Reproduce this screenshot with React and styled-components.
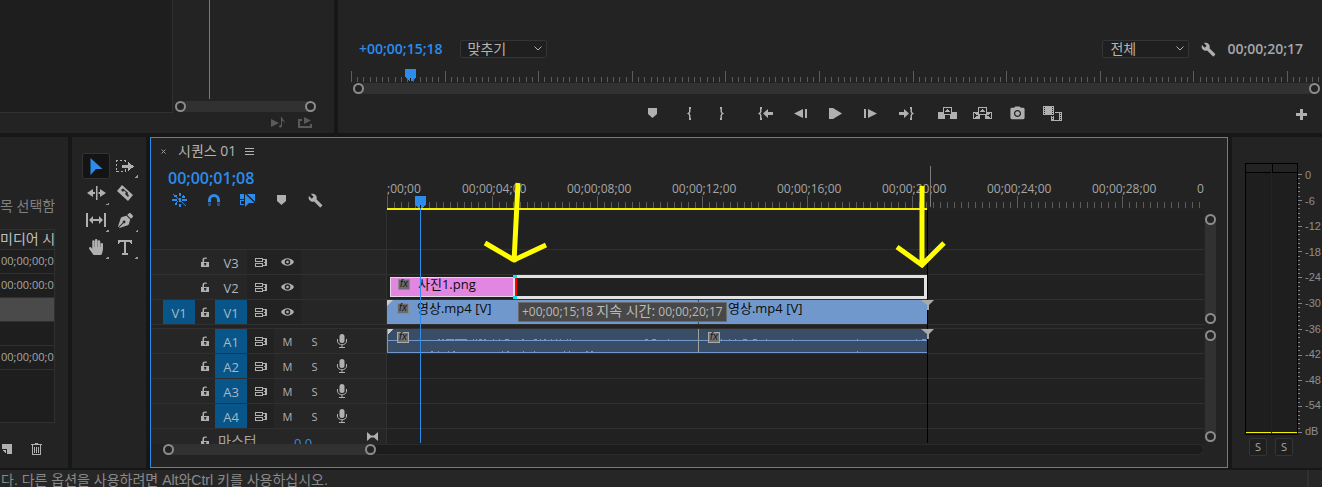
import React from "react";
import styled, { createGlobalStyle, css } from "styled-components";
import { MdBuild, MdPhotoCamera } from "react-icons/md";
import { FaHandPaper, FaPenNib } from "react-icons/fa";

const c = {
  gap: "#171717",
  panel: "#232323",
  raised: "#262626",
  well: "#1e1e1e",
  lane: "#212121",
  line: "#303030",
  bar: "#313131",
  knob: "#8c8c8c",
  text: "#a6a6a6",
  icon: "#b0b0b0",
  blue: "#2d8ceb",
  target: "#085689",
  clip: "#7198cc",
  audio: "#3a4d66",
  pink: "#e386e1",
};

const Global = createGlobalStyle`
  *, *::before, *::after { box-sizing: border-box; }
  body {
    margin: 0;
    background: ${c.gap};
    color: ${c.text};
    font-family: "Open Sans", "Noto Sans CJK KR", sans-serif;
    font-size: 13px;
  }
  button, select {
    font: inherit;
    color: inherit;
    background: none;
    border: 0;
    padding: 0;
    margin: 0;
  }
  svg { display: block; flex: none; }
`;

const Shell = styled.div`
  display: flex;
  flex-direction: column;
  height: 100vh;
  overflow: hidden;
`;

const TopRow = styled.div`
  display: flex;
  gap: 4px;
  height: 133px;
  flex: none;
`;

const MainRow = styled.main`
  display: flex;
  gap: 4px;
  flex: 1;
  min-height: 0;
  margin: 4px 0 2px;
`;

const Panel = styled.section`
  background: ${c.panel};
  overflow: hidden;
`;

/* ---------- zoom scroll bars ---------- */

const Track = styled.div`
  display: flex;
  justify-content: space-between;
  align-items: center;
  background: ${c.bar};
  border-radius: 6px;
  flex-direction: ${(p) => (p.$vertical ? "column" : "row")};
  ${(p) => (p.$vertical ? css`width: 11px;` : css`height: 11px;`)}
`;

const Knob = styled.span`
  width: 11px;
  height: 11px;
  border: 2px solid ${c.knob};
  border-radius: 50%;
  background: ${c.panel};
`;

const ZoomBar = ({ vertical, className }) => (
  <Track $vertical={vertical} className={className}>
    <Knob />
    <Knob />
  </Track>
);

/* ---------- source panel ---------- */

const SourcePanel = styled(Panel)`
  width: 334px;
  display: grid;
  grid-template-columns: 173px 1fr;
  grid-template-rows: 113px 1fr;
`;

const SourceWell = styled.div`
  background: ${c.well};
  border-right: 1px solid ${c.line};
  border-bottom: 1px solid ${c.line};
`;

const SourceSide = styled.div`
  display: flex;
  flex-direction: column;
  padding: 0 18px 0 2px;
`;

const SourceCursor = styled.div`
  width: 1px;
  height: 99px;
  margin: 0 0 2px 34px;
  background: ${c.blue};
`;

const SourceButtons = styled.div`
  grid-column: 2;
  display: flex;
  gap: 12px;
  align-items: center;
  padding: 0 0 1px 98px;
  color: #5a5a5a;
`;

/* ---------- program panel ---------- */

const ProgramPanel = styled(Panel)`
  flex: 1;
  min-width: 0;
  padding-top: 38px;
`;

const ProgramHead = styled.div`
  display: flex;
  align-items: center;
  height: 22px;
  padding: 0 19px 0 21px;
`;

const Timecode = styled.span`
  font-size: ${(p) => (p.$large ? 16 : 14)}px;
  line-height: 20px;
  font-weight: 600;
  color: ${(p) => (p.$muted ? c.text : c.blue)};
`;

const SelectBox = styled.label`
  position: relative;
  width: 87px;
  margin-left: ${(p) => (p.$end ? "auto" : "17px")};
  svg {
    position: absolute;
    right: 5px;
    top: 6px;
    pointer-events: none;
  }
`;

const Select = styled.select`
  appearance: none;
  display: block;
  width: 100%;
  height: 18px;
  padding-left: 7px;
  border: 1px solid #343434;
  border-radius: 2px;
  background: #1f1f1f;
  font-size: 14px;
  line-height: 16px;
  color: #b4b4b4;
`;

const WrenchButton = styled.button`
  display: flex;
  margin: 0 11px 0 12px;
  color: ${c.icon};
`;

const MonitorRuler = styled.div`
  position: relative;
  height: 14px;
  margin: 9px 0 0 13px;
  padding-top: 2px;
`;

const MonitorHead = styled.svg`
  position: absolute;
  left: 54px;
  top: 0;
`;

const MonitorZoom = styled(ZoomBar)`
  margin: 0 2px 0 15px;
`;

const Transport = styled.div`
  display: grid;
  grid-template-columns: 7fr auto 6fr;
  align-items: center;
  height: 38px;
`;

const ButtonSet = styled.div`
  grid-column: 2;
  display: flex;
  padding-left: 2px;
`;

const TransportButton = styled.button`
  display: flex;
  justify-content: center;
  align-items: center;
  width: ${(p) => p.$w || 35}px;
  height: 24px;
  margin-left: ${(p) => p.$gap || 0}px;
  color: ${c.icon};
`;

const AddButton = styled(TransportButton)`
  justify-self: end;
  margin: 3px 3px 0 0;
`;

/* ---------- project panel ---------- */

const ProjectPanel = styled(Panel)`
  width: 68px;
  display: flex;
  flex-direction: column;
  white-space: nowrap;
`;

const ProjectNote = styled.p`
  margin: 59px 0 13px;
  font-size: 14px;
  line-height: 20px;
  color: #808080;
`;

const ProjectWell = styled.div`
  width: 55px;
  flex: 1;
  overflow: hidden;
  background: ${c.well};
  border: solid ${c.line};
  border-width: 1px 1px 1px 0;
`;

const ProjectTable = styled.table`
  border-collapse: collapse;
  table-layout: fixed;
  width: 100%;
  th, td {
    height: 24px;
    padding: 0 0 0 1px;
    border-bottom: 1px solid ${c.line};
    font-size: 11px;
    line-height: 16px;
    text-align: left;
  }
  th {
    height: 19px;
    padding: 0;
    font-size: 14px;
    line-height: 18px;
    font-weight: 400;
    color: #c0c0c0;
    background: ${c.panel};
  }
`;

const ProjectRow = styled.tr`
  background: ${(p) => (p.$selected ? "#4a4a4a" : "transparent")};
`;

const ProjectTools = styled.div`
  display: flex;
  gap: 19px;
  align-items: center;
  height: 45px;
  padding: 6px 0 0 2px;
  color: ${c.icon};
`;

const PlainButton = styled.button`
  display: flex;
`;

/* ---------- tools ---------- */

const ToolPanel = styled(Panel)`
  width: 74px;
  padding: 16px 0 0 10px;
`;

const ToolGrid = styled.div`
  display: grid;
  grid-template-columns: 28px 28px;
  grid-auto-rows: 27px;
  column-gap: 1px;
`;

const Tool = styled.button`
  position: relative;
  display: flex;
  align-items: center;
  justify-content: center;
  height: 26px;
  color: ${(p) => (p.$active ? c.blue : c.icon)};
  border: 1px solid ${(p) => (p.$active ? "#333" : "transparent")};
  border-radius: 2px;
  background: ${(p) => (p.$active ? "#141414" : "none")};
  ${(p) =>
    p.$more &&
    css`
      &::after {
        content: "";
        position: absolute;
        right: 0;
        bottom: 0;
        width: 3px;
        height: 3px;
        background: linear-gradient(135deg, transparent 50%, #999 50%);
      }
    `}
`;

/* ---------- timeline ---------- */

const TimelinePanel = styled(Panel)`
  position: relative;
  flex: 1;
  min-width: 0;
  display: flex;
  flex-direction: column;
  border: 1px solid ${c.blue};
`;

const TabRow = styled.div`
  display: flex;
  align-items: center;
  height: 28px;
  flex: none;
  padding: 0 0 2px 10px;
  color: #b4b4b4;
`;

const TabTitle = styled.span`
  margin: 0 9px 0 12px;
  font-size: 14px;
  line-height: 20px;
`;

const HeadRow = styled.div`
  display: flex;
  height: 44px;
  flex: none;
`;

const HeadControls = styled.div`
  width: 235px;
  flex: none;
  padding: 2px 0 0 17px;
`;

const SequenceTime = styled(Timecode)`
  display: block;
`;

const HeadIcons = styled.div`
  display: flex;
  gap: 19px;
  align-items: center;
  margin: 4px 0 0 4px;
  height: 16px;
  color: ${c.icon};
`;

const HeadIcon = styled.button`
  display: flex;
  justify-content: center;
  width: 15px;
  color: ${(p) => (p.$on ? c.blue : c.icon)};
`;

const Ruler = styled.div`
  flex: 1;
  min-width: 0;
  margin: 0 23px 0 1px;
  padding-top: 14px;
  overflow: hidden;
`;

const RulerLabels = styled.div`
  display: flex;
  height: 16px;
`;

const RulerLabel = styled.span`
  flex: none;
  width: 105px;
  font-size: 12px;
  line-height: 18px;
  &:first-child { width: 75px; }
`;

const WorkArea = styled.div`
  width: 540px;
  height: 2px;
  background: #f4ee00;
`;

const TrackArea = styled.div`
  display: flex;
  flex: 1;
  min-height: 0;
`;

const Tracks = styled.div`
  flex: 1;
  min-width: 0;
  overflow: hidden;
`;

const TrackRow = styled.div`
  display: flex;
  height: ${(p) => p.$h || 25}px;
  border-bottom: 1px solid ${c.line};
`;

const TrackHeader = styled.div`
  display: flex;
  align-items: stretch;
  width: 236px;
  flex: none;
  padding-left: 12px;
  background: ${(p) => (p.$blank ? c.panel : c.raised)};
  border-right: 1px solid ${c.line};
`;

const Lane = styled.div`
  position: relative;
  display: flex;
  flex: 1;
  min-width: 0;
  background: ${c.lane};
`;

const Patch = styled.button`
  width: 32px;
  padding-top: 2px;
  line-height: 20px;
  font-size: 13px;
  color: #a9b7c2;
  background: ${(p) => (p.$on ? c.target : "none")};
`;

const HeaderIcon = styled.button`
  display: flex;
  align-items: center;
  justify-content: center;
  width: ${(p) => p.$w || 27}px;
  font-size: 11px;
  color: ${c.icon};
  background: ${(p) => (p.$dark ? "#222222" : "none")};
`;

const MasterName = styled.span`
  width: 76px;
  padding-left: 3px;
  font-size: 14px;
  line-height: 24px;
`;

const MasterLevel = styled.span`
  width: 76px;
  padding-left: 3px;
  line-height: 28px;
  color: ${c.blue};
`;

const MasterMix = styled.button`
  display: flex;
  padding-top: 3px;
  color: ${c.icon};
`;

const Clip = styled.div`
  display: flex;
  flex: none;
  width: ${(p) => p.$w}px;
  padding-left: ${(p) => p.$inset || 10}px;
  color: #0c0c0c;
  background: ${c.clip};
  & + & { border-left: 1px solid #404f66; }
`;

const StillClip = styled(Clip)`
  height: 20px;
  margin: 2px 0 0 3px;
  padding-left: 7px;
  background: ${c.pink};
  border: 1px solid #e2d8e2;
`;

const SoundClip = styled(Clip)`
  position: relative;
  background: ${c.audio};
  border-bottom: 1px solid ${c.clip};
  border-left: 1px solid ${c.clip};
  & + & { border-left: 1px solid #a0a0a0; }
`;

const Wave = styled.svg`
  position: absolute;
  left: 0;
  top: 0;
`;

const FxBadge = styled.span`
  position: relative;
  width: 12px;
  height: 11px;
  margin-top: ${(p) => p.$top || 3}px;
  border: 1px solid ${(p) => (p.$plain ? "#8a8a8a" : "#aaa")};
  background: ${(p) => (p.$plain ? "#6a6a6e" : "#707274")};
  font-family: "Liberation Sans", sans-serif;
  font-size: 10px;
  line-height: 8px;
  font-style: italic;
  font-weight: 400;
  text-align: center;
  color: #161616;
`;

const ClipName = styled.span`
  margin-left: ${(p) => p.$gap || 8}px;
  font-size: 13px;
  line-height: ${(p) => p.$line || 17}px;
  white-space: nowrap;
`;

const TrimGhost = styled.svg`
  position: absolute;
  left: 126px;
  top: 0;
`;

const TrimTip = styled.div`
  position: absolute;
  left: 367px;
  top: 164px;
  padding: 0 3px;
  border: 1px solid #6b6b6b;
  background: #484848;
  color: #b9b9b9;
  font-size: 12px;
  line-height: 18px;
  white-space: nowrap;
`;

const TipWords = styled.span`
  font-size: 14px;
  line-height: 16px;
`;

const Overlay = styled.svg`
  position: absolute;
  left: 0;
  top: 0;
  pointer-events: none;
`;

const Divider = styled.div`
  height: 4px;
  background: ${c.panel};
  border-bottom: 1px solid ${c.line};
`;

const ScrollColumn = styled.div`
  width: 23px;
  display: flex;
  flex-direction: column;
  gap: 6px;
  padding: 4px 0 2px 1px;
`;

const UpperZoom = styled(ZoomBar)`
  height: 110px;
  flex: none;
`;

const LowerZoom = styled(ZoomBar)`
  flex: 1;
`;

const BottomScroll = styled.div`
  flex: none;
  height: 11px;
  margin: 0 23px 12px 12px;
  background: #1c1c1c;
  border-radius: 6px;
  box-shadow: inset 0 0 0 1px #2b2b2b;
`;

const BottomZoom = styled(ZoomBar)`
  width: 213px;
`;

/* ---------- audio meters ---------- */

const MeterPanel = styled(Panel)`
  width: 90px;
  padding: 26px 0 12px 13px;
  display: flex;
  flex-direction: column;
`;

const MeterBody = styled.div`
  display: flex;
  flex: 1;
  min-height: 0;
`;

const Meter = styled.div`
  display: grid;
  grid-template-columns: 1fr 1fr;
  grid-template-rows: 9px 1fr;
  column-gap: 1px;
  width: 53px;
  flex: none;
  height: 272px;
  border: 1px solid #000;
`;

const MeterPeak = styled.span`
  border-bottom: 1px solid #000;
  & + & { border-left: 1px solid #000; }
`;

const MeterBar = styled.span`
  background: ${c.well};
  border-bottom: 1px solid #f4ee00;
  margin-bottom: 1px;
`;

const Scale = styled.div`
  display: flex;
  flex-direction: column;
  justify-content: space-between;
  height: 275px;
  padding-top: 5px;
  margin-left: 2px;
  font-family: "Liberation Sans", sans-serif;
  font-size: 11px;
  line-height: 14px;
  color: #8f8f8f;
`;

const SoloRow = styled.div`
  display: flex;
  gap: 8px;
  padding-left: 4px;
`;

const Solo = styled.button`
  width: 18px;
  height: 18px;
  border: 1px solid #343434;
  border-radius: 2px;
  background: #1f1f1f;
  font-size: 11px;
  line-height: 14px;
`;

const StatusBar = styled.footer`
  display: flex;
  height: 17px;
  flex: none;
  background: ${c.raised};
  font-family: "Liberation Sans", "Noto Sans CJK KR", sans-serif;
  font-size: 14px;
  line-height: 20px;
  white-space: nowrap;
  color: #8a8a8a;
`;

const StatusText = styled.span`
  flex: 1;
  padding-left: 1px;
`;

const StatusEnd = styled.span`
  width: 15px;
  border-left: 2px solid ${c.line};
`;

/* ---------- drawings ---------- */

const Svg = ({ w, h, children, smooth }) => (
  <svg
    width={w}
    height={h}
    viewBox={`0 0 ${w} ${h}`}
    fill="currentColor"
    shapeRendering={smooth ? "auto" : "crispEdges"}
    aria-hidden="true"
  >
    {children}
  </svg>
);

const Chevron = () => (
  <Svg w={8} h={5} smooth>
    <path d="M0.5 0.5 4 4 7.5 0.5" fill="none" stroke="#b0b0b0" />
  </Svg>
);

const MarkerIcon = () => (
  <Svg w={9} h={10} smooth>
    <path d="M0 0H9V6L4.500 10 0 6Z" />
  </Svg>
);

const BraceIn = () => (
  <Svg w={5} h={13} smooth>
    <path d="M2 0H4V2H3.500V5L2.500 6.500 3.500 8V11H4V13H2V8L0 6.500 2 5Z" />
  </Svg>
);

const BraceOut = () => (
  <Svg w={5} h={13} smooth>
    <path d="M1 0H3V5L5 6.500 3 8V13H1V11H1.500V8L2.500 6.500 1.500 5V2H1Z" />
  </Svg>
);

const GoIn = () => (
  <Svg w={16} h={13} smooth>
    <path d="M2 0H4V2H3.500V5L2.500 6.500 3.500 8V11H4V13H2V8L0 6.500 2 5ZM5 6.500 10 2V5H15V8H10V11Z" />
  </Svg>
);

const GoOut = () => (
  <Svg w={16} h={13} smooth>
    <path d="M12 0H14V5L16 6.500 14 8V13H12V11H12.500V8L13.500 6.500 12.500 5V2H12ZM11 6.500 6 2V5H1V8H6V11Z" />
  </Svg>
);

const StepBack = () => (
  <Svg w={13} h={9} smooth>
    <path d="M0 4.500 9 0V9ZM11 0H13V9H11Z" />
  </Svg>
);

const StepForward = () => (
  <Svg w={13} h={9} smooth>
    <path d="M13 4.500 4 0V9ZM0 0H2V9H0Z" />
  </Svg>
);

const PlayIcon = () => (
  <Svg w={13} h={11} smooth>
    <path d="M0 0H4L13 5.500 4 11H0Z" />
  </Svg>
);

const LiftIcon = () => (
  <Svg w={19} h={12}>
    <path d="M0 5H5V0H14V5H19V12H12V8H7V12H0ZM6 1V7H13V1Z" fillRule="evenodd" />
    <path d="M9 2H10V3H11V4H12V5H7V4H8V3H9Z" />
  </Svg>
);

const ExtractIcon = () => (
  <Svg w={19} h={12}>
    <path d="M0 5H5V0H14V5H19V12H12V8H7V12H0ZM6 1V7H13V1ZM1 6V11L5 8.500ZM18 6V11L14 8.500Z" fillRule="evenodd" />
    <path d="M9 2H10V3H11V4H12V5H7V4H8V3H9Z" />
  </Svg>
);

const CompareIcon = () => (
  <Svg w={19} h={15}>
    <path d="M0 0H11V9H0ZM1 1V2H2V1ZM1 3V4H2V3ZM1 5V6H2V5ZM1 7V8H2V7ZM9 1V2H10V1ZM9 3V4H10V3ZM9 5V6H10V5ZM9 7V8H10V7Z" fillRule="evenodd" />
    <path d="M12 6H19V15H8V10H9V11H10V10H11V14H16V7H12ZM17 7V8H18V7ZM17 9V10H18V9ZM17 11V12H18V11ZM17 13V14H18V13ZM9 12V13H10V12Z" fillRule="evenodd" />
  </Svg>
);

const PlusIcon = () => (
  <Svg w={11} h={11}>
    <path d="M4 0H7V4H11V7H7V11H4V7H0V4H4Z" />
  </Svg>
);

const PlayNote = () => (
  <Svg w={15} h={11} smooth>
    <path d="M0 2 8 6 0 10ZM10 0H11C11 3 15 3 13 7 13.500 4 12 4 11 4V9C11 11 8 11 8 9.500 8 8.500 9 8 10 8Z" />
  </Svg>
);

const ExportIcon = () => (
  <Svg w={14} h={11} smooth>
    <path d="M0 2H4V4H2V9H12V7H14V11H0ZM6 0 13 3.500 6 7Z" />
  </Svg>
);

const NewItemIcon = () => (
  <Svg w={10} h={10}>
    <path d="M0 0H10V10H5V5H0ZM0 6H4V10L0 6Z" />
  </Svg>
);

const TrashIcon = () => (
  <Svg w={11} h={12}>
    <path d="M4 0H7V1H11V2H10V12H1V2H0V1H4ZM2 2V11H9V2ZM3 4H4V10H3ZM5 4H6V10H5ZM7 4H8V10H7Z" />
  </Svg>
);

const ArrowTool = () => (
  <Svg w={13} h={17} smooth>
    <path d="M0.500 0 12.500 11H6L0.500 17Z" />
  </Svg>
);

const TrackSelectTool = () => (
  <Svg w={18} h={12}>
    <path d="M0 0H2V1H1V2H0ZM4 0H6V1H4ZM8 0H10V2H9V1H8ZM0 4H1V6H0ZM0 8H1V10H0ZM0 11H3V12H0ZM5 11H7V12H5ZM9 9H10V12H9Z" />
    <path d="M6 5H12V2L18 6.500 12 11V8H6Z" />
  </Svg>
);

const RippleTool = () => (
  <Svg w={19} h={14} smooth>
    <path d="M9 0H10.500V14H9ZM0 7 6 3V6H8V8H6V11ZM19 7 13 3V6H11.500V8H13V11Z" />
  </Svg>
);

const RazorTool = () => (
  <Svg w={16} h={16} smooth>
    <path d="M5 0 16 10 11 16 0 6ZM4 5 6 7 7 5.500 9 7.500 8 9 11 12 12 10.500 10.500 9 11 7.800 6 3.500Z" fillRule="evenodd" />
  </Svg>
);

const SlipTool = () => (
  <Svg w={20} h={14} smooth>
    <path d="M0 0H2V14H0ZM18 0H20V14H18ZM3 7 7 3V6H13V3L17 7 13 11V8H7V11Z" />
  </Svg>
);

const TypeTool = () => (
  <Svg w={14} h={15}>
    <path d="M0 0H14V4H13L12 2H8V13H10V15H4V13H6V2H2L1 4H0Z" />
  </Svg>
);

const NestIcon = () => (
  <Svg w={15} h={14}>
    <path d="M7 0H9V3H7ZM2 2H5V4H2ZM10 3H13V5H10ZM0 6H5V8H0ZM10 6H15V8H10ZM7 5H9V9H7ZM7 11H9V14H7ZM3 10H5V12H3Z" />
    <path d="M1 1 14 13" stroke="currentColor" shapeRendering="auto" />
    <path d="M12 2 3 11" stroke="currentColor" strokeDasharray="3 1" />
  </Svg>
);

const MagnetIcon = () => (
  <Svg w={12} h={12} smooth>
    <path d="M1.500 8V6A4.500 4.500 0 0 1 10.500 6V8" fill="none" stroke="currentColor" strokeWidth="3" />
    <path d="M0 8.500H3V12H0ZM9 8.500H12V12H9Z" opacity="0.45" />
  </Svg>
);

const LinkedIcon = () => (
  <Svg w={15} h={13} smooth>
    <path d="M0 0H4V5H0ZM7 0H15V7.500ZM5 0 14.500 9H9L5 13ZM0 6H4V7H1V10H4V11H0Z" />
  </Svg>
);

const CloseIcon = () => (
  <Svg w={5} h={5} smooth>
    <path d="M0.500 0.500 4.500 4.500M4.500 0.500 0.500 4.500" stroke="#999" />
  </Svg>
);

const MenuIcon = () => (
  <Svg w={9} h={7}>
    <path d="M0 0H9V1H0ZM0 3H9V4H0ZM0 6H9V7H0Z" />
  </Svg>
);

const LockIcon = () => (
  <Svg w={8} h={10} smooth>
    <path d="M0 5H1.500V3C1.500 0.500 4 0 6 1L5.500 2C4 1.500 3 1.500 3 3.500V5H8V10H0ZM3 6V7.500H3.700V9H4.700V7.500H5.400V6Z" fillRule="evenodd" />
  </Svg>
);

const SyncIcon = () => (
  <Svg w={12} h={9}>
    <path d="M0 0H8V4H0ZM1 1V3H7V1ZM0 5H8V9H0ZM1 6V8H7V6ZM8 1H12V8H8V7H10V5H9V4H10V2H8Z" fillRule="evenodd" />
  </Svg>
);

const EyeIcon = () => (
  <Svg w={13} h={8} smooth>
    <path d="M0 4C3-1 10-1 13 4 10 9 3 9 0 4Z" />
    <circle cx="6.500" cy="4" r="2.800" fill="#222" />
    <circle cx="6.500" cy="4" r="1.300" />
  </Svg>
);

const MicIcon = () => (
  <Svg w={10} h={14} smooth>
    <rect x="2.500" y="0" width="5" height="9" rx="2.500" />
    <path d="M0.500 5V7C0.500 12 9.500 12 9.500 7V5M5 11V13M2 13.500H8" fill="none" stroke="currentColor" />
  </Svg>
);

const BowtieIcon = () => (
  <Svg w={11} h={9} smooth>
    <path d="M0 0 4 3.500H7L11 0V9L7 5.500H4L0 9Z" />
  </Svg>
);

const Ticks = ({ height, step, minor }) => (
  <svg width="100%" height={height} shapeRendering="crispEdges" aria-hidden="true">
    {Array.from({ length: 420 }, (_, i) => {
      const len = i % 15 === 0 ? height : minor;
      return (
        <rect key={i} x={Math.round(i * step)} y={height - len} width="1" height={len} fill="#5c5c5c" />
      );
    })}
  </svg>
);

const Fold = () => <path d="M0 0H5L0 5Z" fill="#ccc" />;

const WaveForm = ({ w, peaks, low, start }) => (
  <Wave width={w} height="24" shapeRendering="crispEdges" aria-hidden="true">
    <rect y="11" width={w} height="1" fill={c.clip} />
    {peaks.map(([x, n]) => (
      <rect key={x} x={x} y="10" width={n} height="1" fill={c.clip} />
    ))}
    {low.map(([x, n]) => (
      <rect key={x} x={x} y="22" width={n} height="1" fill={c.clip} />
    ))}
    {start && <Fold />}
  </Wave>
);

const dbMarks = ["0", "-6", "-12", "-18", "-24", "-30", "-36", "-42", "-48", "-54", "dB"];

const DbTicks = () => (
  <svg width="5" height="272" shapeRendering="crispEdges" aria-hidden="true">
    {Array.from({ length: 61 }, (_, i) => (
      <rect key={i} x="0" y={Math.round(11 + i * 4.3)} width={i % 6 === 0 ? 4 : 2} height="1" fill="#858585" />
    ))}
  </svg>
);

/* ---------- composition ---------- */

const times = [";00;00", "00;00;04;00", "00;00;08;00", "00;00;12;00", "00;00;16;00", "00;00;20;00", "00;00;24;00", "00;00;28;00", "0"];

const mediaRows = [
  { t: "00;00;00;0" },
  { t: "00:00:00:0" },
  { t: "", selected: true },
  { t: "" },
  { t: "00;00;00;0" },
];

const tools = [
  { name: "Selection", icon: <ArrowTool />, active: true },
  { name: "Track select", icon: <TrackSelectTool />, more: true },
  { name: "Ripple edit", icon: <RippleTool />, more: true },
  { name: "Razor", icon: <RazorTool /> },
  { name: "Slip", icon: <SlipTool />, more: true },
  { name: "Pen", icon: <FaPenNib size={15} />, more: true },
  { name: "Hand", icon: <FaHandPaper size={16} />, more: true },
  { name: "Type", icon: <TypeTool />, more: true },
];

const VideoTrack = ({ name, source, children }) => (
  <TrackRow>
    <TrackHeader>
      <Patch $on={!!source}>{source}</Patch>
      <HeaderIcon $w={20} aria-label="Lock"><LockIcon /></HeaderIcon>
      <Patch $on={!!source}>{name}</Patch>
      <HeaderIcon $dark aria-label="Sync lock"><SyncIcon /></HeaderIcon>
      <HeaderIcon $dark aria-label="Visibility"><EyeIcon /></HeaderIcon>
    </TrackHeader>
    <Lane>{children}</Lane>
  </TrackRow>
);

const AudioTrack = ({ name, children }) => (
  <TrackRow>
    <TrackHeader>
      <Patch />
      <HeaderIcon $w={20} aria-label="Lock"><LockIcon /></HeaderIcon>
      <Patch $on>{name}</Patch>
      <HeaderIcon $dark aria-label="Sync lock"><SyncIcon /></HeaderIcon>
      <HeaderIcon>M</HeaderIcon>
      <HeaderIcon>S</HeaderIcon>
      <HeaderIcon aria-label="Record"><MicIcon /></HeaderIcon>
    </TrackHeader>
    <Lane>{children}</Lane>
  </TrackRow>
);

const Timeline = () => (
  <TimelinePanel>
    <TabRow>
      <PlainButton aria-label="Close"><CloseIcon /></PlainButton>
      <TabTitle>시퀀스 01</TabTitle>
      <PlainButton aria-label="Menu"><MenuIcon /></PlainButton>
    </TabRow>
    <HeadRow>
      <HeadControls>
        <SequenceTime $large>00;00;01;08</SequenceTime>
        <HeadIcons>
          <HeadIcon $on aria-label="Nest"><NestIcon /></HeadIcon>
          <HeadIcon $on aria-label="Snap"><MagnetIcon /></HeadIcon>
          <HeadIcon $on aria-label="Linked selection"><LinkedIcon /></HeadIcon>
          <HeadIcon aria-label="Marker"><MarkerIcon /></HeadIcon>
          <HeadIcon aria-label="Settings"><MdBuild size={15} /></HeadIcon>
        </HeadIcons>
      </HeadControls>
      <Ruler>
        <RulerLabels>
          {times.map((t) => <RulerLabel key={t}>{t}</RulerLabel>)}
        </RulerLabels>
        <Ticks height={12} step={7} minor={6} />
        <WorkArea />
      </Ruler>
    </HeadRow>
    <TrackArea>
      <Tracks>
        <TrackRow $h={40}>
          <TrackHeader $blank />
          <Lane />
        </TrackRow>
        <VideoTrack name="V3" />
        <VideoTrack name="V2">
          <StillClip $w={124}>
            <FxBadge $plain $top={1}>fx</FxBadge>
            <ClipName $line={12}>사진1.png</ClipName>
          </StillClip>
          <TrimGhost width="414" height="24" shapeRendering="crispEdges" aria-hidden="true">
            <path d="M0 0H414V24H0ZM4 3V21H411V3Z" fill="#e2e2e2" fillRule="evenodd" />
            <path d="M0 0H4V3H0ZM0 21H4V24H0Z" fill="#00e5ee" />
            <path d="M2 3H4V21H2Z" fill="#f00" />
          </TrimGhost>
        </VideoTrack>
        <VideoTrack name="V1" source="V1">
          <Clip $w={311}>
            <FxBadge $plain>fx</FxBadge>
            <ClipName>영상.mp4 [V]</ClipName>
          </Clip>
          <Clip $w={229} $inset={28}>
            <ClipName $gap={1}>영상.mp4 [V]</ClipName>
          </Clip>
        </VideoTrack>
        <Divider />
        <AudioTrack name="A1">
          <SoundClip $w={311} $inset={9}>
            <WaveForm
              w={310}
              start
              peaks={[[50, 2], [54, 2], [58, 8], [67, 12], [85, 1], [88, 1], [91, 3], [96, 2], [105, 1], [111, 1], [117, 4], [134, 2], [146, 3], [152, 1], [156, 2], [163, 1], [168, 1], [172, 1], [179, 1], [182, 1], [257, 3], [264, 4], [280, 1]]}
              low={[[43, 2], [50, 1], [60, 1], [65, 2], [114, 1], [119, 2], [135, 1], [146, 1], [176, 1], [181, 1], [198, 2], [203, 2]]}
            />
            <FxBadge>fx</FxBadge>
          </SoundClip>
          <SoundClip $w={229} $inset={9}>
            <WaveForm
              w={228}
              peaks={[[22, 1], [30, 1], [36, 1], [44, 4], [54, 4], [67, 1], [93, 1], [158, 1], [217, 1], [223, 4]]}
              low={[[158, 1]]}
            />
            <FxBadge>fx</FxBadge>
          </SoundClip>
        </AudioTrack>
        <AudioTrack name="A2" />
        <AudioTrack name="A3" />
        <AudioTrack name="A4" />
        <TrackRow>
          <TrackHeader>
            <Patch />
            <HeaderIcon $w={20} aria-label="Lock"><LockIcon /></HeaderIcon>
            <MasterName>마스터</MasterName>
            <MasterLevel>0.0</MasterLevel>
            <div>
              <MasterMix aria-label="Level"><BowtieIcon /></MasterMix>
            </div>
          </TrackHeader>
          <Lane />
        </TrackRow>
      </Tracks>
      <ScrollColumn>
        <UpperZoom vertical />
        <LowerZoom vertical />
      </ScrollColumn>
    </TrackArea>
    <BottomScroll>
      <BottomZoom />
    </BottomScroll>
    <TrimTip>
      +00;00;15;18 <TipWords>지속 시간:</TipWords> 00;00;20;17
    </TrimTip>
    <Overlay width="820" height="305" aria-hidden="true">
      <g shapeRendering="crispEdges">
        <rect x="776" y="72" width="1" height="233" fill="#000" />
        <rect x="779" y="28" width="1" height="41" fill="#7c7c7c" />
        <rect x="269" y="70" width="1" height="235" fill={c.blue} />
        <path d="M264 58H275V67L271 70H268L264 67Z" fill={c.blue} />
        <rect x="269" y="67" width="1" height="3" fill="#111" />
      </g>
      <path d="M236 162H242L236 168Z" fill="#ccc" />
      <path d="M770 162H783L778 167V172H776V167Z" fill="#aaa" />
      <path d="M770 191H783L778 196V201H776V196Z" fill="#aaa" />
      <g fill="none" stroke="#ff0" strokeWidth="5">
        <path d="M367 45 363 124M334 105 363 122 395 107" />
        <path d="M771 48V128M746 109 771 127 793 105" />
      </g>
    </Overlay>
  </TimelinePanel>
);

export default function App() {
  return (
    <Shell>
      <Global />
      <TopRow>
        <SourcePanel>
          <SourceWell />
          <SourceSide>
            <SourceCursor />
            <ZoomBar />
          </SourceSide>
          <SourceButtons>
            <PlainButton aria-label="Play audio"><PlayNote /></PlainButton>
            <PlainButton aria-label="Export"><ExportIcon /></PlainButton>
          </SourceButtons>
        </SourcePanel>
        <ProgramPanel>
          <ProgramHead>
            <Timecode>+00;00;15;18</Timecode>
            <SelectBox>
              <Select aria-label="Zoom"><option>맞추기</option></Select>
              <Chevron />
            </SelectBox>
            <SelectBox $end>
              <Select aria-label="Resolution"><option>전체</option></Select>
              <Chevron />
            </SelectBox>
            <WrenchButton aria-label="Settings"><MdBuild size={15} /></WrenchButton>
            <Timecode $muted>00;00;20;17</Timecode>
          </ProgramHead>
          <MonitorRuler>
            <MonitorHead width="11" height="12" shapeRendering="crispEdges" aria-hidden="true">
              <path d="M0 0H11V8L7 12H4L0 8Z" fill={c.blue} />
              <rect x="5" y="9" width="1" height="3" fill="#111" />
            </MonitorHead>
            <Ticks height={11} step={6.24} minor={5} />
          </MonitorRuler>
          <MonitorZoom />
          <Transport>
            <ButtonSet>
              <TransportButton $w={36} aria-label="Marker"><MarkerIcon /></TransportButton>
              <TransportButton $w={32} $gap={3} aria-label="Mark in"><BraceIn /></TransportButton>
              <TransportButton $w={32} aria-label="Mark out"><BraceOut /></TransportButton>
              <TransportButton $gap={11} aria-label="Go to in"><GoIn /></TransportButton>
              <TransportButton aria-label="Step back"><StepBack /></TransportButton>
              <TransportButton aria-label="Play"><PlayIcon /></TransportButton>
              <TransportButton aria-label="Step forward"><StepForward /></TransportButton>
              <TransportButton aria-label="Go to out"><GoOut /></TransportButton>
              <TransportButton $gap={7} aria-label="Lift"><LiftIcon /></TransportButton>
              <TransportButton aria-label="Extract"><ExtractIcon /></TransportButton>
              <TransportButton aria-label="Export frame"><MdPhotoCamera size={17} /></TransportButton>
              <TransportButton aria-label="Comparison view"><CompareIcon /></TransportButton>
            </ButtonSet>
            <AddButton aria-label="Add button"><PlusIcon /></AddButton>
          </Transport>
        </ProgramPanel>
      </TopRow>
      <MainRow>
        <ProjectPanel>
          <ProjectNote>목 선택함</ProjectNote>
          <ProjectWell>
            <ProjectTable>
              <thead>
                <tr><th>미디어 시</th></tr>
              </thead>
              <tbody>
                {mediaRows.map((r, i) => (
                  <ProjectRow key={i} $selected={r.selected}><td>{r.t}</td></ProjectRow>
                ))}
              </tbody>
            </ProjectTable>
          </ProjectWell>
          <ProjectTools>
            <PlainButton aria-label="New item"><NewItemIcon /></PlainButton>
            <PlainButton aria-label="Delete"><TrashIcon /></PlainButton>
          </ProjectTools>
        </ProjectPanel>
        <ToolPanel>
          <ToolGrid>
            {tools.map((t) => (
              <Tool key={t.name} aria-label={t.name} $active={t.active} $more={t.more}>{t.icon}</Tool>
            ))}
          </ToolGrid>
        </ToolPanel>
        <Timeline />
        <MeterPanel>
          <MeterBody>
            <Meter>
              <MeterPeak />
              <MeterPeak />
              <MeterBar />
              <MeterBar />
            </Meter>
            <DbTicks />
            <Scale>
              {dbMarks.map((m) => <span key={m}>{m}</span>)}
            </Scale>
          </MeterBody>
          <SoloRow>
            <Solo>S</Solo>
            <Solo>S</Solo>
          </SoloRow>
        </MeterPanel>
      </MainRow>
      <StatusBar>
        <StatusText>다. 다른 옵션을 사용하려면 Alt와Ctrl 키를 사용하십시오.</StatusText>
        <StatusEnd />
      </StatusBar>
    </Shell>
  );
}
